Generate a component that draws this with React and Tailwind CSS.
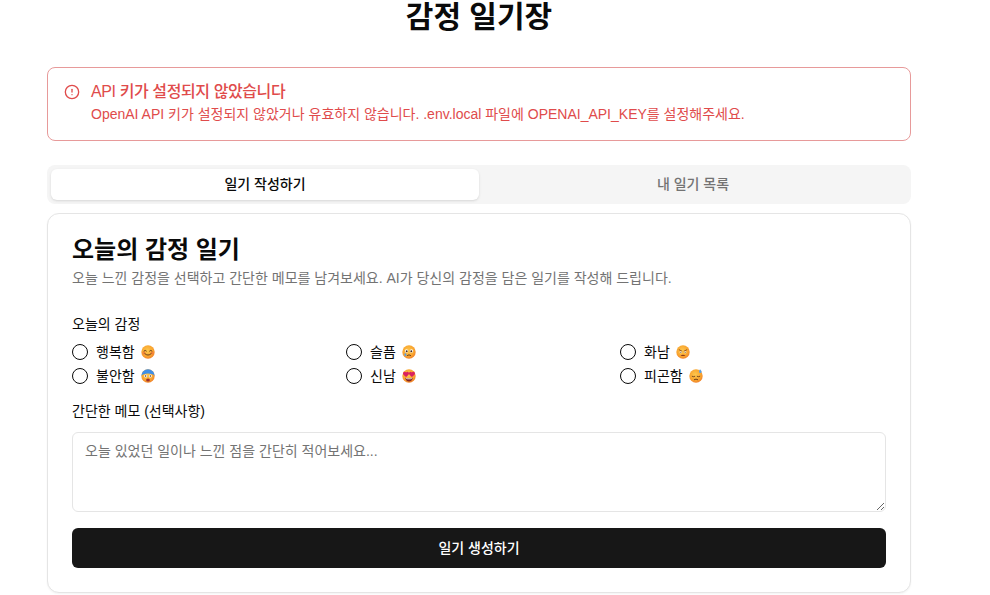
import { CircleAlert } from 'lucide-react';

function Face({ children }) {
  return (
    <svg width="14" height="14" viewBox="0 0 14 14" className="shrink-0">
      <defs>
        <radialGradient id="skin" cx="0.45" cy="0.4" r="0.65">
          <stop offset="0" stopColor="#fdc84e" />
          <stop offset="0.65" stopColor="#f9a52f" />
          <stop offset="1" stopColor="#ee7b2c" />
        </radialGradient>
      </defs>
      <circle cx="7" cy="7" r="6.7" fill="url(#skin)" />
      {children}
    </svg>
  );
}

const emotions = [
  {
    label: '행복함',
    icon: (
      <Face>
        <circle cx="2.900" cy="7.900" r="1.500" fill="#f0653f" opacity="0.55" />
        <circle cx="11.100" cy="7.900" r="1.500" fill="#f0653f" opacity="0.55" />
        <path d="M3 6q1.200-1.500 2.400 0M8.600 6q1.200-1.500 2.400 0" fill="none" stroke="#5b3216" strokeWidth="0.900" strokeLinecap="round" />
        <path d="M3.800 8.600q3.200 3.200 6.400 0" fill="none" stroke="#5b3216" strokeWidth="0.900" strokeLinecap="round" />
      </Face>
    ),
  },
  {
    label: '슬픔',
    icon: (
      <Face>
        <circle cx="4.500" cy="6" r="1.700" fill="#fff" />
        <circle cx="9.500" cy="6" r="1.700" fill="#fff" />
        <circle cx="4.700" cy="6.300" r="1" fill="#4a2c18" />
        <circle cx="9.300" cy="6.300" r="1" fill="#4a2c18" />
        <path d="M5.400 10.400q1.600-1.400 3.200 0" fill="none" stroke="#5b3216" strokeWidth="0.900" strokeLinecap="round" />
        <path d="M3.200 7.800q-1.500 2-.6 3 1.100.7 1.800-.1.600-1-1.200-2.900z" fill="#5c9fe0" />
      </Face>
    ),
  },
  {
    label: '화남',
    icon: (
      <Face>
        <path d="M3.200 4.800l2.600 1.300M10.800 4.800l-2.600 1.300" stroke="#7a3a18" strokeWidth="0.800" strokeLinecap="round" />
        <circle cx="4.700" cy="7.200" r="1" fill="#fff" />
        <circle cx="9.300" cy="7.200" r="1" fill="#fff" />
        <circle cx="4.800" cy="7.300" r="0.500" fill="#3c2012" />
        <circle cx="9.200" cy="7.300" r="0.500" fill="#3c2012" />
        <path d="M4.500 10.900q2.500-2.400 5 0z" fill="#8a3a1e" />
      </Face>
    ),
  },
  {
    label: '불안함',
    icon: (
      <Face>
        <path d="M.3 7a6.700 6.700 0 0 1 13.400 0q-1-1.600-2.500-1.800-4.200-1.600-8.400 0Q1.300 5.400.3 7z" fill="#3f8fe8" />
        <circle cx="4.700" cy="7" r="1.500" fill="#fff" />
        <circle cx="9.300" cy="7" r="1.500" fill="#fff" />
        <circle cx="4.700" cy="7" r="0.700" fill="#33201a" />
        <circle cx="9.300" cy="7" r="0.700" fill="#33201a" />
        <ellipse cx="7" cy="10.900" rx="1.900" ry="1.500" fill="#9c2f2f" />
      </Face>
    ),
  },
  {
    label: '신남',
    icon: (
      <Face>
        <path d="M1 4.600C.9 2.700 3.200 2 4.100 3.500 5 2 7.100 2.700 7 4.600 6.900 6 5.300 7 4.100 8 2.800 7 1.100 6 1 4.600z" fill="#d9215f" />
        <path d="M7 4.600C6.900 2.700 9.100 2 9.900 3.500 10.800 2 13.100 2.700 13 4.600 12.900 6 11.200 7 9.900 8 8.700 7 7.100 6 7 4.600z" fill="#d9215f" />
        <path d="M3.300 8.800q3.700 1.200 7.400 0-.5 3.800-3.700 3.800T3.300 8.800z" fill="#7f2424" />
        <path d="M4 9.200q3 .7 6 0l-.2.700q-2.800.5-5.600 0z" fill="#fff" />
      </Face>
    ),
  },
  {
    label: '피곤함',
    icon: (
      <Face>
        <path d="M3.200 7.400q1.300.8 2.600 0M8.200 7.400q1.300.8 2.600 0" fill="none" stroke="#5b3216" strokeWidth="0.800" strokeLinecap="round" />
        <path d="M5.300 10.600q1.700-1.200 3.400 0" fill="none" stroke="#5b3216" strokeWidth="0.900" strokeLinecap="round" />
        <path d="M11 .3q-1.900 2.300-.7 3.400 1 .7 2 0 1-1.200-1.300-3.400z" fill="#5c9fe0" />
      </Face>
    ),
  },
];

export default function App() {
  return (
    <div className="h-[595px] w-[990px] overflow-hidden bg-white font-['Liberation_Sans','Noto_Sans_CJK_KR',sans-serif] text-[#0a0a0a]">
      <div className="ml-[47px] w-[864px]">
        <h1 className="-mt-[1px] mb-[32px] text-center text-[30px] leading-[36px] font-bold">감정 일기장</h1>

        <div className="mb-[24px] flex h-[74px] items-start gap-[11px] rounded-lg border border-[#e79a9a] bg-white px-[16px] pt-[12px] text-[#e04b4b]">
          <CircleAlert size={16} className="mt-[4px] shrink-0" />
          <div>
            <p className="text-[16px] leading-[24px] font-medium tracking-tight">API 키가 설정되지 않았습니다</p>
            <p className="text-[14px] leading-[20px]">
              OpenAI API 키가 설정되지 않았거나 유효하지 않습니다. .env.local 파일에 OPENAI_API_KEY를 설정해주세요.
            </p>
          </div>
        </div>

        <div className="mb-[9px] flex h-[39px] rounded-lg bg-[#f5f5f5] p-[4px] text-[14px] font-medium">
          <div className="flex flex-1 items-center justify-center rounded-md bg-white shadow-sm">일기 작성하기</div>
          <div className="flex flex-1 items-center justify-center text-[#737373]">내 일기 목록</div>
        </div>

        <div className="rounded-xl border border-[#e5e5e5] bg-white p-[24px] shadow-[0_1px_2px_rgba(0,0,0,0.05)]">
          <h2 className="text-[24px] leading-[24px] font-bold">오늘의 감정 일기</h2>
          <p className="mt-[6px] text-[14px] leading-[20px] text-[#737373]">
            오늘 느낀 감정을 선택하고 간단한 메모를 남겨보세요. AI가 당신의 감정을 담은 일기를 작성해 드립니다.
          </p>

          <p className="mt-[26px] text-[14px] leading-[20px]">오늘의 감정</p>
          <div className="mt-[8px] grid grid-cols-3 gap-x-[8px] gap-y-[4px]">
            {emotions.map((e) => (
              <label key={e.label} className="flex h-[20px] items-center text-[14px]">
                <span className="h-[16px] w-[16px] shrink-0 rounded-full border border-[#0a0a0a]" />
                <span className="ml-[8px]">{e.label}</span>
                <span className="ml-[6px]">{e.icon}</span>
              </label>
            ))}
          </div>

          <p className="mt-[15px] text-[14px] leading-[20px]">간단한 메모 (선택사항)</p>
          <textarea
            placeholder="오늘 있었던 일이나 느낀 점을 간단히 적어보세요..."
            className="mt-[11px] block h-[80px] w-full rounded-md border border-[#e5e5e5] px-[12px] py-[8px] text-[14px] leading-[20px] placeholder:text-[#737373]"
          />
          <button className="mt-[16px] h-[40px] w-full rounded-md bg-[#171717] text-[14px] font-medium text-white">일기 생성하기</button>
        </div>
      </div>
    </div>
  );
}
